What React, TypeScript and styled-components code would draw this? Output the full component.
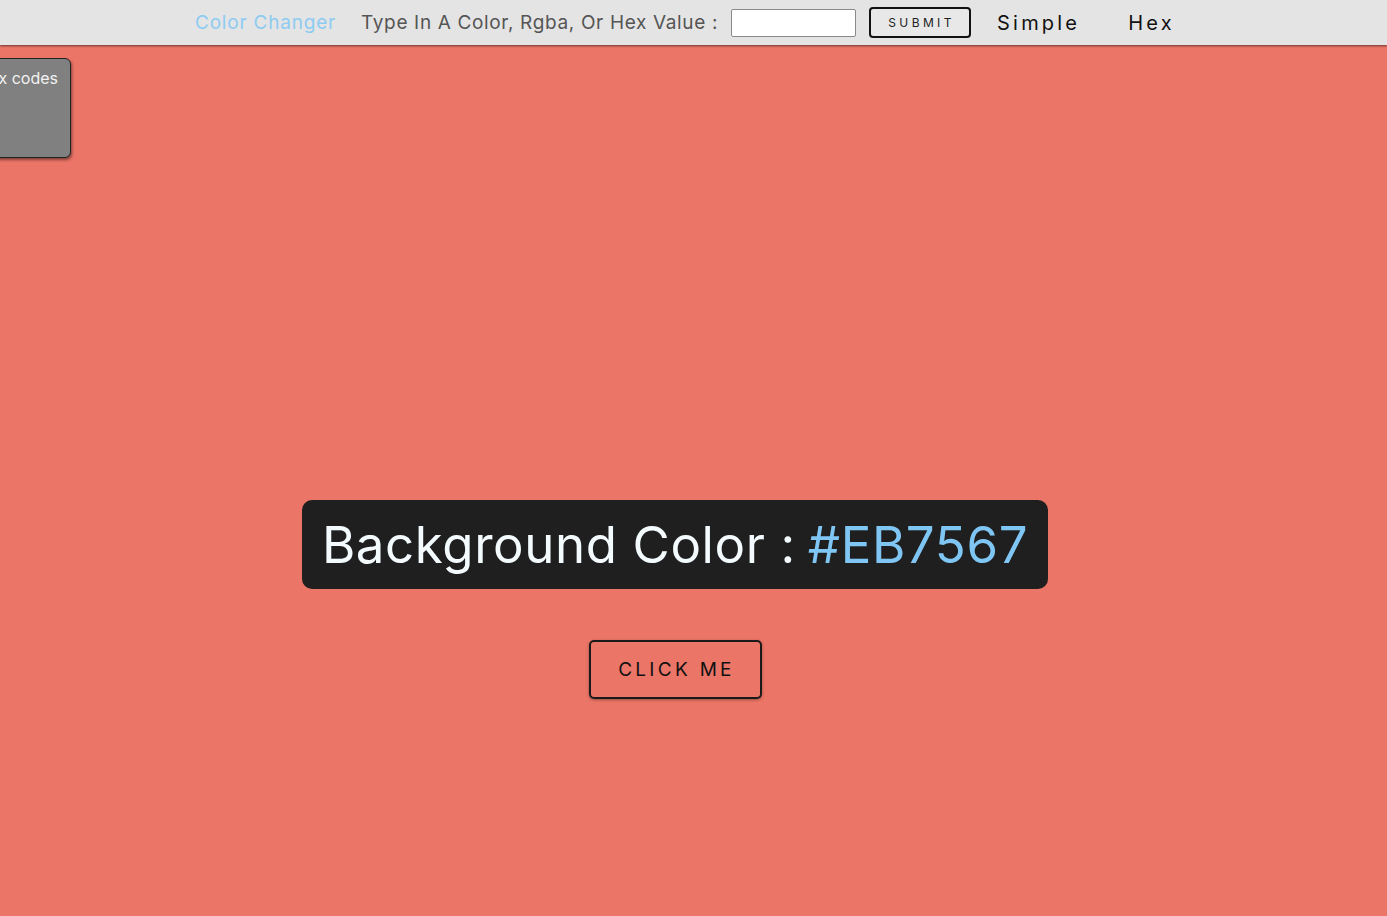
import styled, { createGlobalStyle } from "styled-components";

const GlobalStyle = createGlobalStyle`
  html, body {
    margin: 0;
    padding: 0;
  }
  body {
    background: #eb7567;
    font-family: Inter, "Open Sans", sans-serif;
    min-height: 916px;
    overflow: hidden;
  }
`

const Page = styled.div`
  position: relative;
  min-height: 916px;
  background: #eb7567;
`

const Nav = styled.nav`
  height: 45px;
  background: #e4e4e4;
  box-shadow: 0 1px 2px rgba(0, 0, 0, 0.55);
  display: flex;
  align-items: center;
  padding-left: 195px;
  position: relative;
  z-index: 2;
`

const Brand = styled.a`
  color: #8dcbf2;
  font-size: 19px;
  margin-right: 25px;
  letter-spacing: 0.8px;
`

const Label = styled.label`
  color: #555;
  font-size: 19px;
  letter-spacing: 0.65px;
  margin-right: 13px;
`

const Input = styled.input`
  width: 121px;
  height: 26px;
  border: 1px solid #8a8a8a;
  border-radius: 2px;
  background: #fff;
  padding: 0 1px;
  margin: 0 13px 0 0;
`

const SubmitButton = styled.button`
  width: 102px;
  height: 31px;
  border: 2px solid #111;
  border-radius: 4px;
  background: #e8e8e8;
  font-family: Inter, sans-serif;
  font-size: 12px;
  letter-spacing: 3.4px;
  color: #222;
  padding: 0 0 0 3px;
  margin-right: 26px;
`

const NavLink = styled.a<{ $gap?: number }>`
  color: #111;
  font-size: 20px;
  letter-spacing: 3.2px;
  margin-right: ${({ $gap }) => $gap ?? 0}px;
`

const Hint = styled.div`
  position: absolute;
  left: -28px;
  top: 58px;
  width: 99px;
  height: 100px;
  background: #808080;
  border: 1px solid #222;
  border-radius: 6px;
  box-shadow: 1px 2px 3px rgba(0, 0, 0, 0.45);
  color: #f2f2f2;
  font-size: 16px;
  box-sizing: border-box;
  padding: 9px 12px 0 0;
  text-align: right;
  overflow: hidden;
  white-space: nowrap;
  direction: rtl;
`

const Main = styled.main`
  display: flex;
  flex-direction: column;
  align-items: center;
  padding-top: 455px;
  padding-right: 37px;
`

const Heading = styled.h1`
  margin: 0;
  background: #1f1f1f;
  border-radius: 10px;
  height: 89px;
  box-sizing: border-box;
  padding: 0 20px;
  display: flex;
  align-items: center;
  font-size: 51px;
  font-weight: 400;
  letter-spacing: 0.6px;
  color: #f3fbff;
`

const HexValue = styled.span`
  color: #7fc6f4;
  margin-left: 12px;
`

const ClickButton = styled.button`
  margin-top: 51px;
  width: 173px;
  height: 59px;
  border: 2px solid #1a1a1a;
  border-radius: 5px;
  background: transparent;
  box-shadow: 0 1px 3px rgba(0, 0, 0, 0.35);
  font-family: Inter, sans-serif;
  font-size: 19px;
  letter-spacing: 3.3px;
  color: #111;
  padding: 0 0 0 3px;
`

export default function App() {
  return (
    <Page>
      <GlobalStyle />
      <Nav>
        <Brand>Color Changer</Brand>
        <Label>Type In A Color, Rgba, Or Hex Value :</Label>
        <Input type="text" />
        <SubmitButton>SUBMIT</SubmitButton>
        <NavLink $gap={48}>Simple</NavLink>
        <NavLink>Hex</NavLink>
      </Nav>
      <Hint>Hex codes</Hint>
      <Main>
        <Heading>
          Background Color :<HexValue>#EB7567</HexValue>
        </Heading>
        <ClickButton>CLICK ME</ClickButton>
      </Main>
    </Page>
  );
}
